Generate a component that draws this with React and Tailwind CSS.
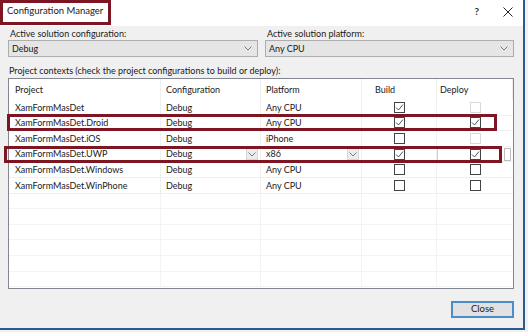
import React from "react";

const rows = [
  { name: "XamFormMasDet", config: "Debug", platform: "Any CPU", build: true, deploy: false, deployDisabled: true },
  { name: "XamFormMasDet.Droid", config: "Debug", platform: "Any CPU", build: true, deploy: true },
  { name: "XamFormMasDet.iOS", config: "Debug", platform: "iPhone", build: false, deploy: false, deployDisabled: true },
  { name: "XamFormMasDet.UWP", config: "Debug", platform: "x86", build: true, deploy: true, editing: true },
  { name: "XamFormMasDet.Windows", config: "Debug", platform: "Any CPU", build: false, deploy: false },
  { name: "XamFormMasDet.WinPhone", config: "Debug", platform: "Any CPU", build: false, deploy: false },
];

const Chevron = ({ className = "" }) => (
  <svg width="8" height="5" viewBox="0 0 8 5" className={className}>
    <path d="M0.5 0.5 L4 4 L7.5 0.5" fill="none" stroke="#7a7a7a" strokeWidth="1" />
  </svg>
);

function CheckBox({ checked, disabled }) {
  return (
    <div
      className={`w-[11px] h-[11px] border bg-white flex items-center justify-center ${
        disabled ? "border-[#d9d9d9]" : "border-[#444]"
      }`}
    >
      {checked && (
        <svg width="9" height="9" viewBox="0 0 9 9">
          <path d="M1 4.5 L3.5 7 L8 1.5" fill="none" stroke="#555" strokeWidth="1" />
        </svg>
      )}
    </div>
  );
}

function Dropdown({ value }) {
  return (
    <div className="h-[17px] bg-[#e5e5e5] border border-[#adadad] flex items-center justify-between pl-[3px] pr-[5px]">
      <span>{value}</span>
      <Chevron />
    </div>
  );
}

export default function App() {
  return (
    <div
      className="w-[528px] h-[332px] bg-[#eef2f6] relative overflow-hidden text-[9px] text-[#1a1a1a]"
      style={{ fontFamily: "Lato, 'Noto Sans', sans-serif" }}
    >
      <div className="w-[525px] h-[330px] border-r-2 border-b-2 border-[#2d5a8c] bg-[#f0f0f0] flex flex-col">
        {/* title bar */}
        <div className="h-[26px] bg-white flex items-center justify-between pl-[7px] pr-[10px] shrink-0">
          <span className="text-[9.5px] mt-[-3px]">Configuration Manager</span>
          <div className="flex items-center gap-[24px] mt-[-3px]">
            <span className="text-[10px] font-bold text-[#333]">?</span>
            <svg width="10" height="10" viewBox="0 0 10 10">
              <path d="M0.5 0.5 L9.5 9.5 M9.5 0.5 L0.5 9.5" stroke="#222" strokeWidth="1" />
            </svg>
          </div>
        </div>

        {/* body */}
        <div className="flex flex-col pl-[8px] pr-[9px] pt-[1px]">
          <div className="grid grid-cols-[250px_249px] gap-x-[7px]">
            <div className="flex flex-col">
              <span className="h-[13px] leading-[13px] pl-[2px]">Active solution configuration:</span>
              <Dropdown value="Debug" />
            </div>
            <div className="flex flex-col">
              <span className="h-[13px] leading-[13px] pl-[2px]">Active solution platform:</span>
              <Dropdown value="Any CPU" />
            </div>
          </div>

          <span className="h-[13px] leading-[13px] mt-[7px] pl-[1px]">
            Project contexts (check the project configurations to build or deploy):
          </span>

          {/* table */}
          <div className="relative mt-[1px] w-[506px] h-[211px] border border-[#828790] bg-white overflow-hidden">
            <div className="grid grid-cols-[152px_100px_101px_75px_76px] grid-rows-[21px] auto-rows-[15.6px]">
              {["Project", "Configuration", "Platform", "Build", "Deploy"].map((h, i) => (
                <div
                  key={h}
                  className={`flex items-center border-r border-[#efefef] ${
                    i === 0 ? "pl-[6px]" : i === 3 ? "pl-[13px]" : i === 4 ? "pl-[3px]" : "pl-[5px]"
                  }`}
                >
                  {h}
                </div>
              ))}
              {rows.map((r) => (
                <React.Fragment key={r.name}>
                  <div className="flex items-center pl-[6px] border-r border-b border-[#f0f0f0]">{r.name}</div>
                  <div className="flex items-center justify-between pl-[5px] pr-[2px] border-r border-b border-[#f0f0f0]">
                    <span>{r.config}</span>
                    {r.editing && (
                      <div className="w-[12px] h-[12px] bg-[#ececec] border border-[#d6d6d6] flex items-center justify-center">
                        <Chevron />
                      </div>
                    )}
                  </div>
                  <div className="flex items-center justify-between pl-[5px] pr-[2px] border-r border-b border-[#f0f0f0]">
                    <span>{r.platform}</span>
                    {r.editing && (
                      <div className="w-[12px] h-[12px] bg-[#ececec] border border-[#d6d6d6] flex items-center justify-center">
                        <Chevron />
                      </div>
                    )}
                  </div>
                  <div className="flex items-center justify-center border-r border-b border-[#f0f0f0]">
                    <CheckBox checked={r.build} />
                  </div>
                  <div
                    className={`relative flex items-center justify-center border-b border-[#f0f0f0] ${
                      r.editing ? "border-l border-l-[#cfcfcf]" : ""
                    }`}
                  >
                    <CheckBox checked={r.deploy} disabled={r.deployDisabled} />
                    {r.editing && (
                      <div className="absolute right-[2px] top-[1px] w-[7px] h-[13px] border border-[#bdbdbd] bg-white" />
                    )}
                  </div>
                </React.Fragment>
              ))}
              {Array.from({ length: 6 }).map((_, k) => (
                <React.Fragment key={k}>
                  <div className="border-r border-b border-[#f3f3f3]" />
                  <div className="border-r border-b border-[#f3f3f3]" />
                  <div className="border-r border-b border-[#f3f3f3]" />
                  <div className="border-r border-b border-[#f3f3f3]" />
                  <div className="border-b border-[#f3f3f3]" />
                </React.Fragment>
              ))}
            </div>
          </div>

          <div className="flex justify-end mt-[12px]">
            <button className="w-[63px] h-[17px] bg-[#e1e1e1] border-2 border-[#4b8ccb] flex items-center justify-center text-[9.5px] text-[#1a1a1a]">
              Close
            </button>
          </div>
        </div>
      </div>

      {/* highlight boxes */}
      <div className="absolute left-0 top-0 w-[111px] h-[25px] border-[3px] border-[#7d1622]" />
      <div className="absolute left-[7px] top-[114px] w-[490px] h-[17px] border-[3px] border-[#7d1622]" />
      <div className="absolute left-[4px] top-[146px] w-[498px] h-[17px] border-[3px] border-[#7d1622]" />
    </div>
  );
}
